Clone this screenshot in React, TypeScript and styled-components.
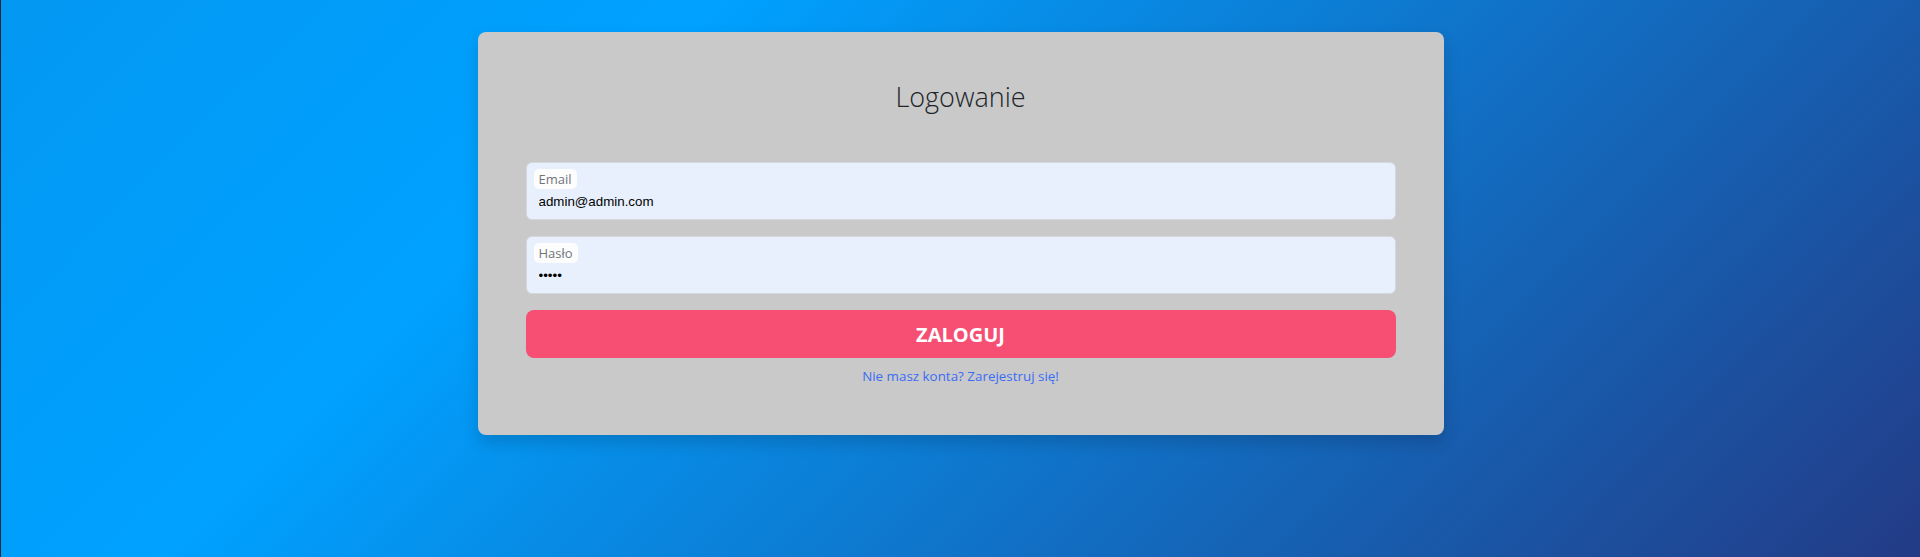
import styled, { createGlobalStyle } from "styled-components";

const GlobalStyle = createGlobalStyle`
  html,
  body {
    margin: 0;
    padding: 0;
    height: 100%;
  }

  body {
    font-family: "Open Sans", "Noto Sans", sans-serif;
    background: linear-gradient(135deg, #0398f2 0%, #00a1ff 29%, #233b86 100%);
    background-attachment: fixed;
    border-left: 1px solid #1d2736;
    box-sizing: border-box;
  }

  *,
  *::before,
  *::after {
    box-sizing: border-box;
  }
`;

const Page = styled.main`
  min-height: 100vh;
  display: flex;
  justify-content: center;
  align-items: flex-start;
  padding-top: 32px;
`;

const Card = styled.form`
  width: 966px;
  padding: 48px;
  background: #c9c9c9;
  border-radius: 8px;
  box-shadow: 0 0.5rem 1rem rgba(0, 0, 0, 0.15);
`;

const Title = styled.h3`
  margin: 0 0 48px;
  font-size: 27px;
  line-height: 34px;
  font-weight: 300;
  color: #212529;
  text-align: center;
`;

const Field = styled.label`
  display: flex;
  flex-direction: column;
  height: 58px;
  margin-bottom: 16px;
  padding: 6px 12px 0;
  background: #e8f0fe;
  border: 1px solid #d4d7dc;
  border-radius: 6px;
`;

const FieldLabel = styled.span`
  align-self: flex-start;
  height: 20px;
  margin-left: -5px;
  padding: 0 5px;
  line-height: 20px;
  font-size: 13px;
  color: #717579;
  background: #fdfdfe;
  border-radius: 5px;
`;

const Input = styled.input`
  margin-top: 5px;
  padding: 0;
  border: 0;
  outline: none;
  background: transparent;
  font-family: "Liberation Sans", Arial, sans-serif;
  font-size: 13.33px;
  line-height: 15px;
  color: #000;
`;

const SubmitButton = styled.button`
  display: block;
  width: 100%;
  height: 48px;
  border: 0;
  border-radius: 8px;
  background: #f64f73;
  color: #fff;
  font-family: "Open Sans", "Noto Sans", sans-serif;
  font-size: 20px;
  font-weight: 700;
  cursor: pointer;
`;

const RegisterLink = styled.a`
  display: block;
  margin-top: 8px;
  text-align: center;
  font-size: 13.4px;
  line-height: 21px;
  color: #3b6cf6;
  text-decoration: none;
`;

function FormField({
  label,
  type,
  value,
}: {
  label: string;
  type: string;
  value: string;
}) {
  return (
    <Field>
      <FieldLabel>{label}</FieldLabel>
      <Input type={type} defaultValue={value} />
    </Field>
  );
}

export default function App() {
  return (
    <>
      <GlobalStyle />
      <Page>
        <Card onSubmit={(e) => e.preventDefault()}>
          <Title>Logowanie</Title>
          <FormField label="Email" type="email" value="admin@admin.com" />
          <FormField label="Hasło" type="password" value="admin" />
          <SubmitButton type="submit">ZALOGUJ</SubmitButton>
          <RegisterLink href="#">Nie masz konta? Zarejestruj się!</RegisterLink>
        </Card>
      </Page>
    </>
  );
}
